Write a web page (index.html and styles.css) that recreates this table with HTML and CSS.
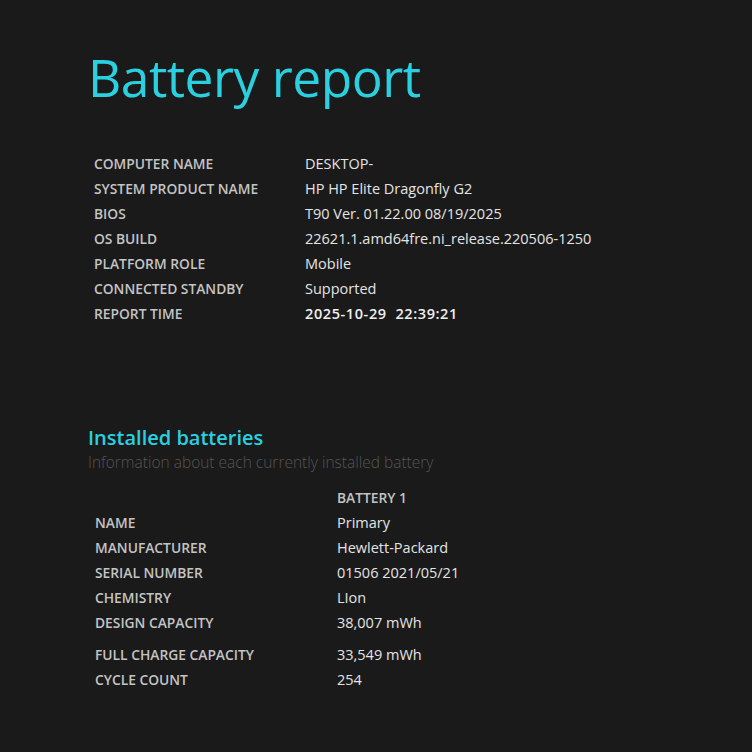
FILE: index.html
```html
<!DOCTYPE html>
<html>
<head>
<meta charset="utf-8">
<link rel="stylesheet" href="styles.css">
</head>
<body>
<div class="page">
  <h1 class="title">Battery report</h1>
  <table class="info">
    <tr><td class="label">COMPUTER NAME</td><td class="value">DESKTOP-</td></tr>
    <tr><td class="label">SYSTEM PRODUCT NAME</td><td class="value">HP HP Elite Dragonfly G2</td></tr>
    <tr><td class="label">BIOS</td><td class="value">T90 Ver. 01.22.00 08/19/2025</td></tr>
    <tr><td class="label">OS BUILD</td><td class="value">22621.1.amd64fre.ni_release.220506-1250</td></tr>
    <tr><td class="label">PLATFORM ROLE</td><td class="value">Mobile</td></tr>
    <tr><td class="label">CONNECTED STANDBY</td><td class="value">Supported</td></tr>
    <tr><td class="label">REPORT TIME</td><td class="value strong">2025-10-29&nbsp;&nbsp;22:39:21</td></tr>
  </table>

  <h2 class="section">Installed batteries</h2>
  <div class="desc">Information about each currently installed battery</div>

  <table class="batteries">
    <tr><td class="label"></td><td class="head">BATTERY 1</td></tr>
    <tr><td class="label">NAME</td><td class="value">Primary</td></tr>
    <tr><td class="label">MANUFACTURER</td><td class="value">Hewlett-Packard</td></tr>
    <tr><td class="label">SERIAL NUMBER</td><td class="value">01506 2021/05/21</td></tr>
    <tr><td class="label">CHEMISTRY</td><td class="value">LIon</td></tr>
    <tr><td class="label">DESIGN CAPACITY</td><td class="value">38,007 mWh</td></tr>
    <tr class="spaced"><td class="label">FULL CHARGE CAPACITY</td><td class="value">33,549 mWh</td></tr>
    <tr><td class="label">CYCLE COUNT</td><td class="value">254</td></tr>
  </table>
</div>
</body>
</html>
```
FILE: styles.css
```css
html, body {
  margin: 0;
  padding: 0;
  background: #1a1a1a;
}
body {
  font-family: "Open Sans", "Noto Sans", sans-serif;
  color: #e6e6e6;
}
.page {
  padding: 44px 0 0 88px;
}
.title {
  margin: 0;
  font-size: 51.5px;
  font-weight: 400;
  line-height: 66px;
  color: #2ad0e0;
  letter-spacing: -0.5px;
}
table {
  border-collapse: collapse;
}
td {
  padding: 0;
  height: 25px;
  vertical-align: middle;
  white-space: nowrap;
}
.info {
  margin: 41px 0 0 6px;
}
.info .label {
  width: 211px;
}
.label {
  font-size: 13.8px;
  font-weight: 600;
  color: #c4c4c4;
}
.value {
  font-size: 14.5px;
  color: #e4e4e4;
}
.value.strong {
  font-weight: 600;
  letter-spacing: 0.6px;
  color: #f0f0f0;
}
.section {
  margin: 99px 0 0 0;
  font-size: 20px;
  font-weight: 600;
  line-height: 26px;
  color: #2ad0e0;
}
.desc {
  font-size: 15.5px;
  font-weight: 300;
  line-height: 22px;
  color: #555555;
}
.batteries {
  margin: 12px 0 0 7px;
}
.batteries .label {
  width: 242px;
}
.head {
  font-size: 13.8px;
  font-weight: 600;
  color: #c4c4c4;
}
.spaced td {
  padding-top: 7px;
}
```
